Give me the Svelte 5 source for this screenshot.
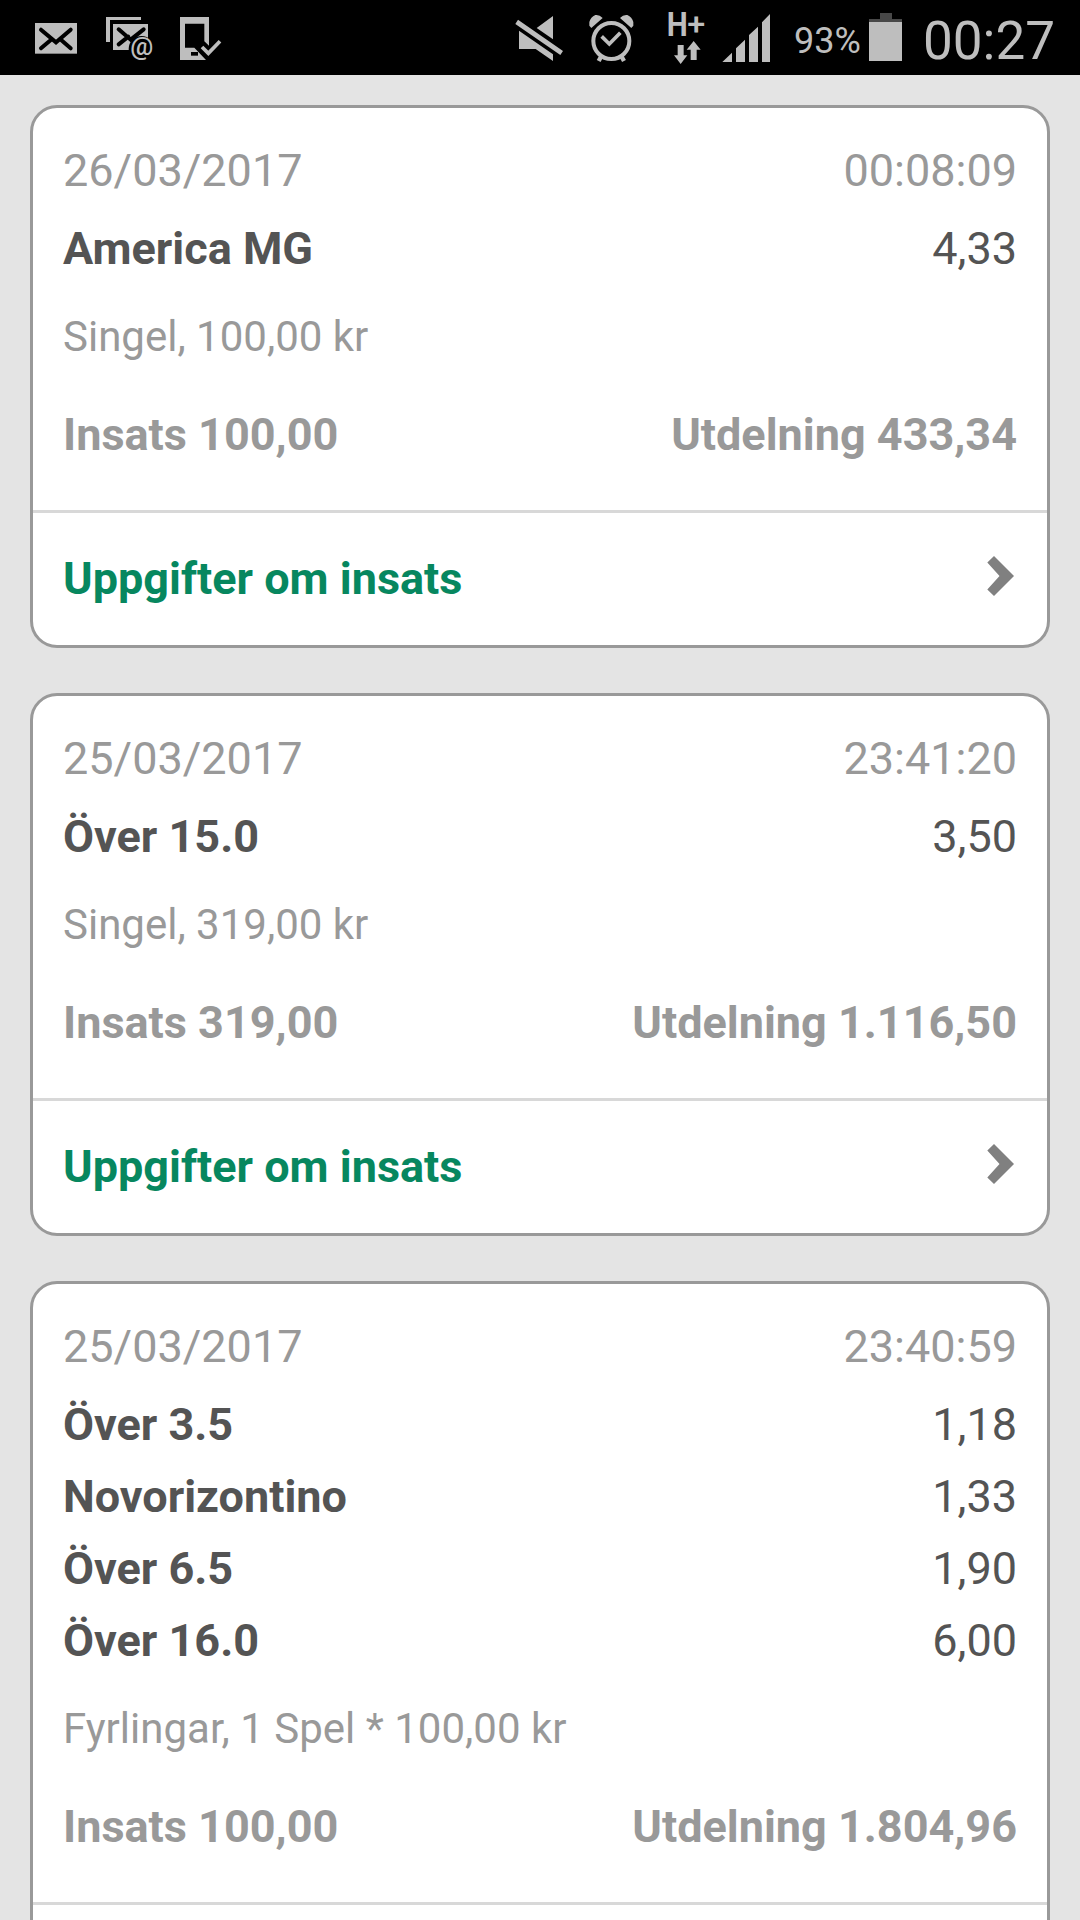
<script>
  const bets = [
    {
      date: '26/03/2017',
      time: '00:08:09',
      legs: [{ name: 'America MG', odds: '4,33' }],
      type: 'Singel, 100,00 kr',
      stake: '100,00',
      payout: '433,34',
      link: 'Uppgifter om insats',
    },
    {
      date: '25/03/2017',
      time: '23:41:20',
      legs: [{ name: 'Över 15.0', odds: '3,50' }],
      type: 'Singel, 319,00 kr',
      stake: '319,00',
      payout: '1.116,50',
      link: 'Uppgifter om insats',
    },
    {
      date: '25/03/2017',
      time: '23:40:59',
      legs: [
        { name: 'Över 3.5', odds: '1,18' },
        { name: 'Novorizontino', odds: '1,33' },
        { name: 'Över 6.5', odds: '1,90' },
        { name: 'Över 16.0', odds: '6,00' },
      ],
      type: 'Fyrlingar, 1 Spel * 100,00 kr',
      stake: '100,00',
      payout: '1.804,96',
    },
  ];
</script>

<div class="screen">
  <header class="status">
    <div class="group notifications">
      <!-- mail -->
      <svg width="42" height="75" viewBox="105 0 126 225">
        <rect x="105" y="69" width="126" height="92" />
        <path class="cut" d="M123 89L168 127L212 89M123 145L155 118M212 145L181 118" />
      </svg>
      <!-- mail accounts -->
      <svg width="48" height="75" viewBox="318 0 144 225">
        <path d="M318 51H423V60H330V126H318Z" />
        <rect x="339" y="72" width="105" height="78" />
        <path class="cut" d="M356 88L392 119L431 88M356 133L385 110" />
        <circle class="hole" cx="425" cy="147" r="39" />
        <text class="at" x="425" y="165" font-size="77" text-anchor="middle">@</text>
      </svg>
      <!-- device check -->
      <svg width="42" height="75" viewBox="540 0 126 225">
        <path d="M540 51H627V137L613 124V71H555V143H583L618 180H540Z" />
        <rect class="hole" x="573" y="156" width="21" height="11" />
        <path class="tick" d="M606 141L625 160L660 124" />
      </svg>
    </div>

    <div class="group system">
      <!-- sound off -->
      <svg width="48" height="75" viewBox="75 0 144 225">
        <path d="M189 48V118L140 84ZM87 92L189 163V183L137 147H87ZM84 59L219 153L211 165L76 72Z" />
      </svg>
      <!-- alarm -->
      <svg class="alarm" width="45" height="75" viewBox="296 0 135 225">
        <circle class="ring" cx="363" cy="123" r="54" />
        <path class="tick" d="M334 109L357 132L390 98" />
        <path d="M303 84L297 77V66Q301 51 315 45Q327 43 337 54ZM423 84L429 77V66Q425 51 411 45Q399 43 389 54Z" />
        <path class="feet" d="M332 170L325 183M394 170L401 183" />
      </svg>
      <!-- mobile data -->
      <svg class="data" width="36" height="75" viewBox="535 0 108 225">
        <text class="bold" x="531" y="108" font-size="97" textLength="63" lengthAdjust="spacingAndGlyphs">H</text>
        <text class="plus" x="593" y="106" font-size="94" textLength="54" lengthAdjust="spacingAndGlyphs">+</text>
        <path d="M564 135H582V166H593L573 192L553 166H564ZM612 123L633 149H621V180H603V149H591Z" />
      </svg>
      <!-- signal strength -->
      <svg class="signal" width="48" height="75" viewBox="696 0 144 225">
        <path d="M697 186L726 158V186ZM738 186V145L765 119V186ZM777 186V105L804 80V186ZM816 186V67L840 42V186Z" />
      </svg>
      <span class="percent">93%</span>
      <!-- battery -->
      <svg width="33" height="75" viewBox="267 0 99 225">
        <path class="empty" d="M300 39H336V57H366V66H267V57H300Z" />
        <rect x="267" y="66" width="99" height="117" />
      </svg>
      <span class="clock">00:27</span>
    </div>
  </header>

  <main>
    {#each bets as bet}
      <article class="card">
        <div class="body">
          <div class="row muted">
            <span>{bet.date}</span>
            <span>{bet.time}</span>
          </div>
          <div class="legs">
            {#each bet.legs as leg}
              <div class="row">
                <strong>{leg.name}</strong>
                <span>{leg.odds}</span>
              </div>
            {/each}
          </div>
          <div class="type">{bet.type}</div>
          <div class="row totals">
            <span>Insats {bet.stake}</span>
            <span>Utdelning {bet.payout}</span>
          </div>
        </div>
        <div class="details">
          {#if bet.link}
            <span>{bet.link}</span>
            <svg width="30" height="42" viewBox="0 0 30 42">
              <path d="M0.3 7.4L7 1L27 21L7 41L0.3 34.6L12.5 21Z" />
            </svg>
          {/if}
        </div>
      </article>
    {/each}
  </main>
</div>

<style>
  :global(body) {
    margin: 0;
    background: #e4e4e4;
  }

  .screen {
    width: 1080px;
    height: 1920px;
    overflow: hidden;
    background: #e4e4e4;
    font-family: Roboto, sans-serif;
    font-size: 45px;
  }

  .status {
    display: flex;
    justify-content: space-between;
    height: 75px;
    padding: 0 26px 0 35px;
    background: #000;
    color: #bebebe;
  }

  .group {
    display: flex;
  }

  .notifications {
    gap: 29px;
  }

  .notifications svg:last-child {
    margin-left: -3px;
  }

  svg {
    display: block;
    flex: none;
  }

  .status svg {
    fill: #bebebe;
    overflow: visible;
  }

  .status .cut {
    fill: none;
    stroke: #000;
    stroke-width: 12;
    stroke-linecap: round;
  }

  .status .hole {
    fill: #000;
  }

  .status .tick {
    fill: none;
    stroke: #bebebe;
    stroke-width: 11;
  }

  .status .ring {
    fill: none;
    stroke: #bebebe;
    stroke-width: 12;
  }

  .status .feet {
    stroke: #bebebe;
    stroke-width: 13;
  }

  .status .empty {
    fill: #484848;
  }

  .bold {
    font-weight: 700;
  }

  .at,
  .plus {
    font-weight: 500;
  }

  .alarm {
    margin-left: 26px;
  }

  .data {
    margin-left: 34px;
  }

  .signal {
    margin-left: 18px;
  }

  .percent {
    width: 75px;
    margin-left: 24px;
    font-size: 36px;
    line-height: 82px;
  }

  .clock {
    margin-left: 21px;
    width: 131px;
    font-size: 53px;
    line-height: 83px;
  }

  main {
    display: flex;
    flex-direction: column;
    gap: 45px;
    padding: 30px;
  }

  .card {
    border: 3px solid #999;
    border-radius: 27px;
    background: #fff;
  }

  .body {
    padding: 27px 30px 45px;
    border-bottom: 3px solid #d8d8d8;
  }

  .row {
    display: flex;
    justify-content: space-between;
    line-height: 72px;
  }

  .muted {
    color: #999;
  }

  .legs {
    margin-top: 6px;
    color: #545454;
  }

  .type {
    margin-top: 22px;
    color: #999;
    font-size: 42px;
    line-height: 60px;
  }

  .totals {
    margin-top: 38px;
    color: #999;
    font-weight: 700;
    line-height: 60px;
  }

  .details {
    display: flex;
    align-items: center;
    justify-content: space-between;
    height: 130px;
    padding: 0 30px 2px;
    color: #07875f;
    font-weight: 700;
  }

  .details svg {
    margin-bottom: 4px;
    fill: #808080;
    filter: blur(0.7px);
  }
</style>
